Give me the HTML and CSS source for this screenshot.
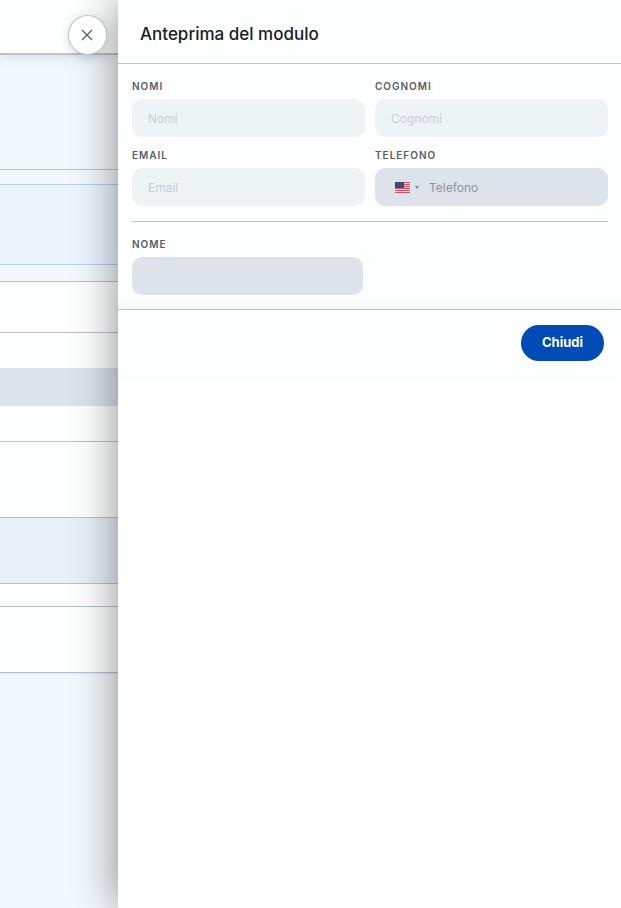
FILE: index.html
```html
<!DOCTYPE html>
<html lang="it">
<head>
<meta charset="utf-8">
<meta name="viewport" content="width=device-width, initial-scale=1">
<title>Anteprima del modulo</title>
<link rel="stylesheet" href="styles.css">
</head>
<body>
<div class="layout">
  <div class="page" aria-hidden="true">
    <div class="page-top"></div>
    <div class="page-intro"></div>
    <div class="page-gap"></div>
    <div class="page-notice"></div>
    <div class="page-gap"></div>
    <div class="page-tabs"></div>
    <div class="page-search"></div>
    <div class="page-band"></div>
    <div class="page-search"></div>
    <div class="page-block"></div>
    <div class="page-head"></div>
    <div class="page-strip"></div>
    <div class="page-actions"></div>
  </div>
  <aside class="drawer" role="dialog" aria-labelledby="drawer-title">
    <button class="close" type="button" aria-label="Chiudi pannello">
      <svg viewBox="0 0 12 12" width="12" height="12"><path d="M1 1L11 11M11 1L1 11"/></svg>
    </button>
    <header class="drawer-header">
      <h1 id="drawer-title">Anteprima del modulo</h1>
    </header>
    <form class="form">
      <div class="fields">
        <div class="field">
          <label for="first">Nomi</label>
          <input id="first" type="text" placeholder="Nomi" disabled>
        </div>
        <div class="field">
          <label for="last">Cognomi</label>
          <input id="last" type="text" placeholder="Cognomi" disabled>
        </div>
        <div class="field">
          <label for="email">Email</label>
          <input id="email" type="email" placeholder="Email" disabled>
        </div>
        <div class="field">
          <label for="phone">Telefono</label>
          <div class="phone">
            <button class="country" type="button" aria-label="Stati Uniti">
              <svg class="flag" viewBox="0 0 15 11" width="15" height="11">
                <path fill="#f3dfe3" d="M0 0h15v11H0z"/>
                <path stroke="#d8515c" d="M0 .5h15M0 2.5h15M0 4.5h15M0 6.5h15M0 8.5h15M0 10.5h15"/>
                <path fill="#34497c" d="M0 0h9v6H0z"/>
                <path stroke="#66779f" stroke-width=".5" stroke-dasharray=".5 1" d="M1 1.5h7M1.500 3h7M1 4.500h7"/>
              </svg>
              <svg class="caret" viewBox="0 0 4 3" width="4" height="3"><path d="M0 0h4L2 3z"/></svg>
            </button>
            <input id="phone" type="tel" placeholder="Telefono">
          </div>
        </div>
      </div>
      <hr>
      <div class="field field-custom">
        <label for="name">Nome</label>
        <input id="name" type="text">
      </div>
    </form>
    <footer class="drawer-footer">
      <button class="primary" type="button">Chiudi</button>
    </footer>
  </aside>
</div>
</body>
</html>
```
FILE: styles.css
```css
* {
  box-sizing: border-box;
}

body {
  margin: 0;
  font-family: "Inter", "Liberation Sans", sans-serif;
  color: #17202a;
  background: #f3f8fc;
}

.layout {
  display: grid;
  grid-template-columns: 19% 1fr;
  min-height: 100vh;
  overflow: hidden;
}

.page > div {
  border-bottom: 1px solid #b7c1cd;
  background: #fdfefe;
}

.page .page-top {
  height: 55px;
  border-bottom: 2px solid #bcc5cb;
  box-shadow: 0 2px 12px rgba(40, 60, 80, 0.14);
  position: relative;
}

.page .page-intro {
  height: 115px;
  background: #f3f8fc;
}

.page .page-gap {
  height: 15px;
  border-color: #b3cff0;
  background: #f3f8fc;
}

.page .page-notice {
  height: 80px;
  border-color: #b3cff0;
  background: #ecf4fe;
}

.page .page-notice + .page-gap {
  height: 17px;
  border-color: #b2bfcd;
}

.page .page-tabs {
  height: 51px;
}

.page .page-search {
  height: 35px;
  border: 0;
}

.page .page-band {
  height: 38px;
  border: 0;
  background: #dce3ea;
}

.page .page-band + .page-search {
  height: 36px;
  border-bottom: 1px solid #b7c1cd;
}

.page .page-block {
  height: 76px;
}

.page .page-head {
  height: 66px;
  background: #e8eff6;
}

.page .page-strip {
  height: 23px;
}

.page .page-actions {
  height: 66px;
  box-shadow: 0 1px 2px rgba(90, 140, 190, 0.15);
}

.drawer {
  position: relative;
  background: #fff;
  box-shadow: 0 0 42px rgba(0, 0, 0, 0.45);
}

.close {
  position: absolute;
  top: 15px;
  left: -50px;
  display: grid;
  place-items: center;
  width: 39px;
  height: 40px;
  padding: 0;
  border: 1px solid #bac4cf;
  border-radius: 50%;
  background: #fdfefe;
  box-shadow: 0 2px 10px rgba(20, 40, 60, 0.16);
}

.close path {
  fill: none;
  stroke: #505963;
  stroke-width: 1.2;
}

.drawer-header {
  padding: 22px 22px 17px;
  border-bottom: 1px solid #bcc3cf;
  background: #fdfefe;
}

h1 {
  margin: 0;
  font-size: 17px;
  line-height: 24px;
  font-weight: 500;
}

.form {
  padding: 14px 13px 14px 14px;
  background: #fdfefe;
}

.fields {
  display: grid;
  grid-template-columns: 1fr 1fr;
  gap: 10px;
}

.field {
  display: flex;
  flex-direction: column;
  gap: 4px;
  min-width: 0;
}

label {
  font-size: 10px;
  line-height: 17px;
  font-weight: 600;
  letter-spacing: 1px;
  text-transform: uppercase;
  color: #555e67;
}

input {
  width: 100%;
  min-width: 0;
  height: 38px;
  padding: 0 16px;
  border: 0;
  border-radius: 10px;
  background: #dce3ea;
  font: 12px "Inter", "Liberation Sans", sans-serif;
  color: #17202a;
}

input::placeholder {
  color: #8d969f;
  opacity: 1;
}

input:disabled {
  background: #eef3f6;
}

input:disabled::placeholder {
  color: #c9ced2;
}

.phone {
  display: flex;
  border-radius: 10px;
  background: #dce3ea;
}

.phone input {
  flex: 1;
  padding-left: 10px;
  background: transparent;
}

.country {
  display: flex;
  align-items: center;
  gap: 5px;
  padding: 0 0 0 20px;
  border: 0;
  background: none;
}

.caret {
  fill: #7d858e;
}

hr {
  width: 100%;
  height: 1px;
  margin: 15px 0 14px;
  border: 0;
  background: #bdc4cc;
}

.field-custom {
  width: 231px;
  max-width: 100%;
}

.drawer-footer {
  display: flex;
  justify-content: flex-end;
  padding: 15px 17px 18px;
  border-top: 1px solid #bcc3cc;
  background: #fdfefe;
  box-shadow: 0 -6px 12px rgba(30, 40, 60, 0.04);
}

.primary {
  height: 36px;
  padding: 0 21px 2px;
  border: 0;
  border-radius: 18px;
  background: #004bb5;
  color: #fff;
  font: 700 13px "Inter", "Liberation Sans", sans-serif;
}
```
